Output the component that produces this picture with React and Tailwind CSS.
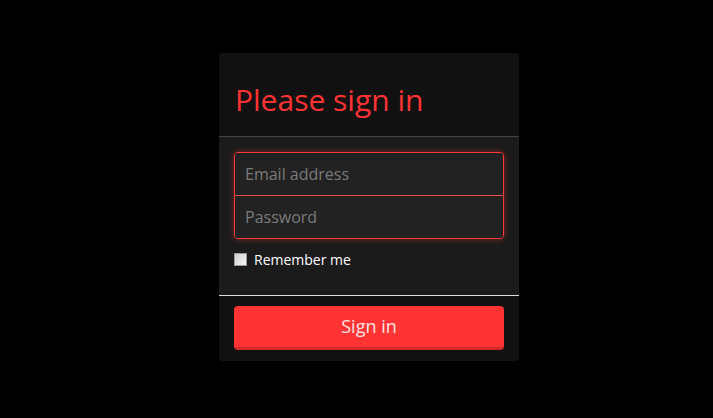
import React from 'react'

export default function App() {
    return (
        <div className="min-h-[418px] w-full bg-black pt-[53px] pl-[219px]" style={{ fontFamily: '"Open Sans", sans-serif' }}>
            <div className="w-[300px] rounded-[4px] overflow-hidden bg-[#1b1b1b]">
                {/* header */}
                <div className="bg-[#111111] px-4 pt-[30px] pb-[20px] border-b border-[#444444]">
                    <h2 className="text-[30px] leading-[1.1] text-[#ff3333]">Please sign in</h2>
                </div>

                {/* form body */}
                <div className="px-[15px] pt-[15px] pb-[25px]">
                    <div className="rounded-[4px] border border-[#ff3a3a] bg-[#222222] overflow-hidden shadow-[0_0_6px_rgba(255,60,60,0.45)]">
                        <input
                            type="text"
                            placeholder="Email address"
                            className="block w-full h-[42px] px-[10px] bg-[#222222] text-[16px] text-white placeholder-[#7a7a7a] outline-none"
                        />
                        <div className="h-px bg-[#f04848]" />
                        <input
                            type="password"
                            placeholder="Password"
                            className="block w-full h-[42px] px-[10px] bg-[#222222] text-[16px] text-white placeholder-[#7a7a7a] outline-none"
                        />
                    </div>
                    <label className="mt-[10px] flex items-center gap-[7px] text-[14px] text-white">
                        <span className="w-[13px] h-[13px] border border-[#9a9a9a] bg-gradient-to-br from-[#d0d0d0] to-[#f8f8f8]" />
                        Remember me
                    </label>
                </div>

                {/* footer */}
                <div className="bg-[#111111] border-t border-[#dddddd] px-[15px] pt-[10px] pb-[11px]">
                    <button className="w-full h-[44px] rounded-[4px] bg-[#ff3333] border-b-[3px] border-[#d42a2a] text-[18px] text-[#ffe4e4]">
                        Sign in
                    </button>
                </div>
            </div>
        </div>
    )
}
